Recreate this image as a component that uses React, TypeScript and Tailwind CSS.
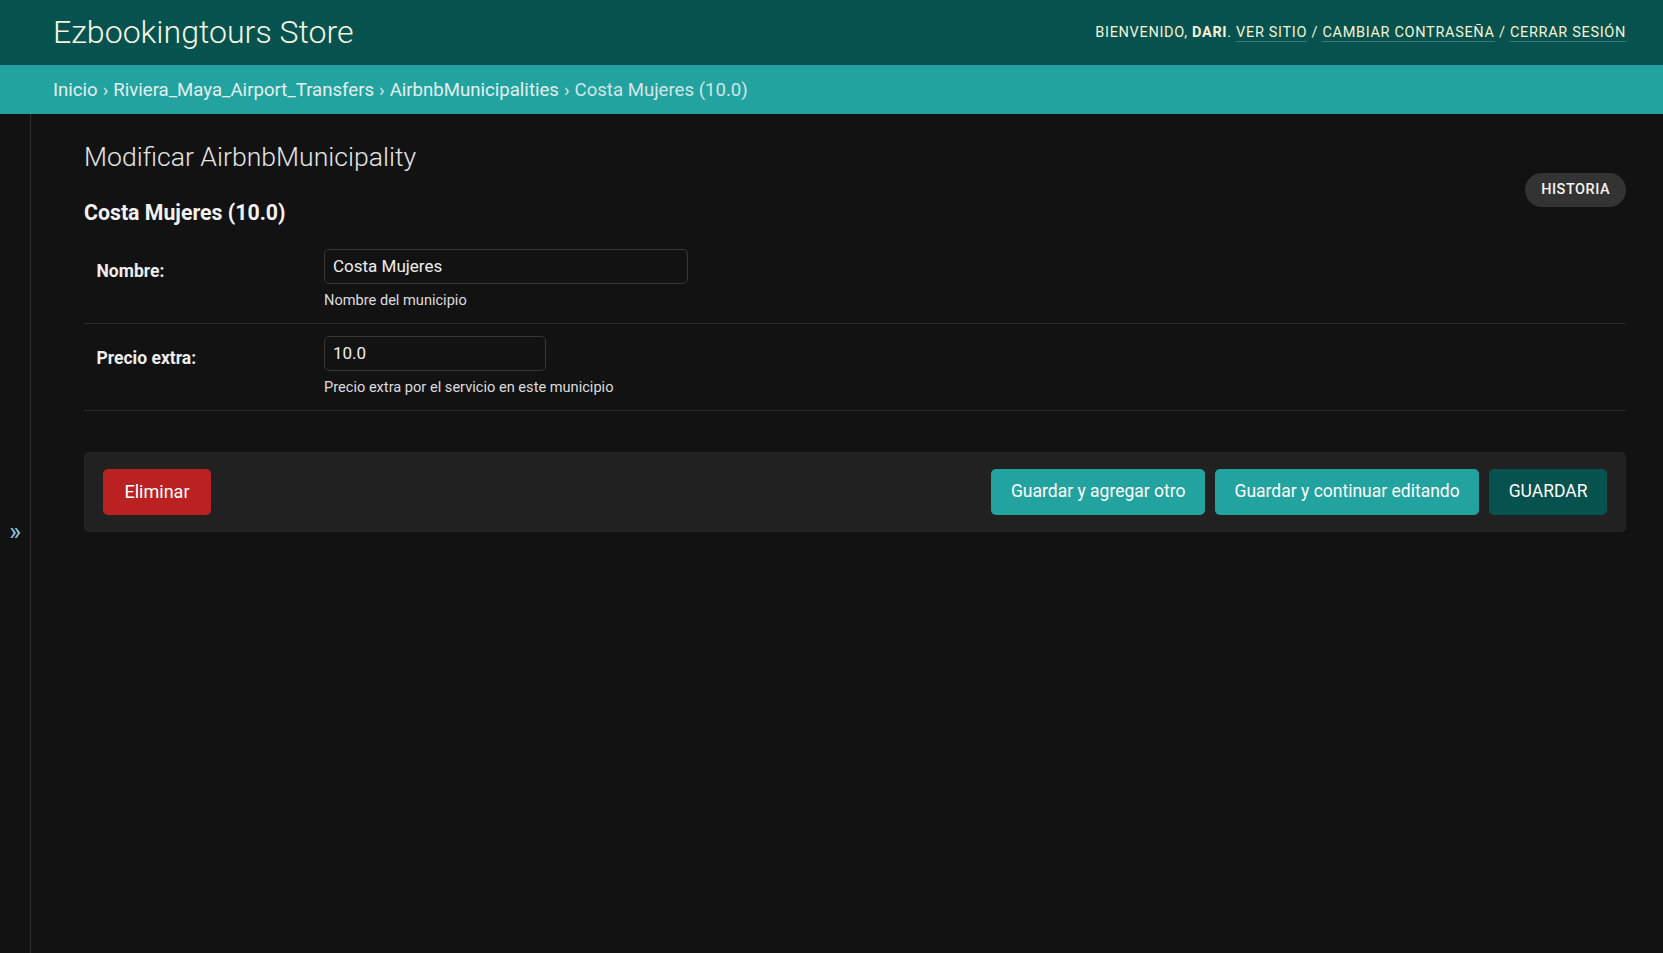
import React from 'react'

// Django-admin style "change" page, dark theme
const crumbs = ['Inicio', 'Riviera_Maya_Airport_Transfers', 'AirbnbMunicipalities']

interface FieldProps {
  label: string
  value: string
  help: string
  inputWidth: string
}

function FormRow({ label, value, help, inputWidth }: FieldProps) {
  return (
    <div className="flex items-start border-b border-[#2a2a2a] px-[12.5px] pt-[12.5px] pb-[12.5px]">
      <label className="w-[227.5px] shrink-0 pt-[9.5px] text-[17.5px] leading-[24px] font-bold text-[#eeeeee]">
        {label}
      </label>
      <div className="flex flex-col">
        <input
          readOnly
          value={value}
          className={`${inputWidth} h-[34.5px] rounded-[5px] border border-[#383838] bg-[#121212] px-[8px] text-[17px] text-[#eeeeee] outline-none`}
        />
        <div className="mt-[6.5px] text-[14.6px] leading-[20px] text-[#dcdcdc]">{help}</div>
      </div>
    </div>
  )
}

export default function App() {
  return (
    <div className="flex h-screen flex-col bg-[#121212] font-['Roboto',sans-serif] text-[#eeeeee]">
      {/* Header */}
      <header className="flex h-[65px] shrink-0 items-center justify-between bg-[#05524f] pl-[53px] pr-[37px]">
        <div className="text-[32.1px] font-light leading-none text-[#f8f5e3]">Ezbookingtours Store</div>
        <div className="text-[14.5px] tracking-[0.68px] text-[#f6f3d6] uppercase">
          Bienvenido, <strong className="font-bold">Dari</strong>.{' '}
          <a className="border-b border-[#f6f3d6]/25">Ver sitio</a> /{' '}
          <a className="border-b border-[#f6f3d6]/25">Cambiar contraseña</a> /{' '}
          <a className="border-b border-[#f6f3d6]/25">Cerrar sesión</a>
        </div>
      </header>

      {/* Breadcrumbs */}
      <nav className="flex h-[48.5px] shrink-0 items-center bg-[#22a39f] px-[53px] pt-[3px] text-[18.6px] text-[#d3e6e8]">
        {crumbs.map((c) => (
          <span key={c}>
            <a className="text-[#e2efef]">{c}</a>
            <span className="mx-[5px]">›</span>
          </span>
        ))}
        <span>Costa Mujeres (10.0)</span>
      </nav>

      {/* Main */}
      <div className="flex min-h-0 flex-1">
        <div className="flex w-[31px] shrink-0 items-center justify-center border-r border-[#303030]">
          <span className="pb-[4px] text-[25px] leading-none text-[#8ec9e0]">»</span>
        </div>

        <main className="flex-1 pl-[53px] pr-[37px] pt-[27px]">
          <h1 className="text-[26.6px] leading-[31px] font-light text-[#e4e4e4]">Modificar AirbnbMunicipality</h1>

          <div className="flex items-start justify-between">
            <h2 className="pt-[29px] text-[21.3px] leading-[24px] font-bold text-[#f2f2f2]">Costa Mujeres (10.0)</h2>
            <a className="mt-[1.5px] flex h-[34px] items-center rounded-full bg-[#333333] px-[16px] text-[14.5px] font-medium tracking-[0.5px] text-[#f4f4f4] uppercase">
              Historia
            </a>
          </div>

          <fieldset className="mt-[12px]">
            <FormRow label="Nombre:" value="Costa Mujeres" help="Nombre del municipio" inputWidth="w-[364px]" />
            <FormRow
              label="Precio extra:"
              value="10.0"
              help="Precio extra por el servicio en este municipio"
              inputWidth="w-[222px]"
            />
          </fieldset>

          <div className="mt-[41px] flex items-center justify-between rounded-[5px] border border-[#262626] bg-[#212121] px-[18px] py-[16px]">
            <a className="flex h-[46px] items-center rounded-[5px] bg-[#ba2121] px-[21.5px] text-[18px] text-white">Eliminar</a>
            <div className="flex gap-[10px]">
              <button className="h-[46px] rounded-[5px] bg-[#22a39f] px-[19.5px] text-[17.5px] text-white">Guardar y agregar otro</button>
              <button className="h-[46px] rounded-[5px] bg-[#22a39f] px-[19.5px] text-[17.5px] text-white">Guardar y continuar editando</button>
              <button className="h-[46px] rounded-[5px] bg-[#05524f] px-[19.5px] text-[17.5px] text-white uppercase">Guardar</button>
            </div>
          </div>
        </main>
      </div>
    </div>
  )
}
